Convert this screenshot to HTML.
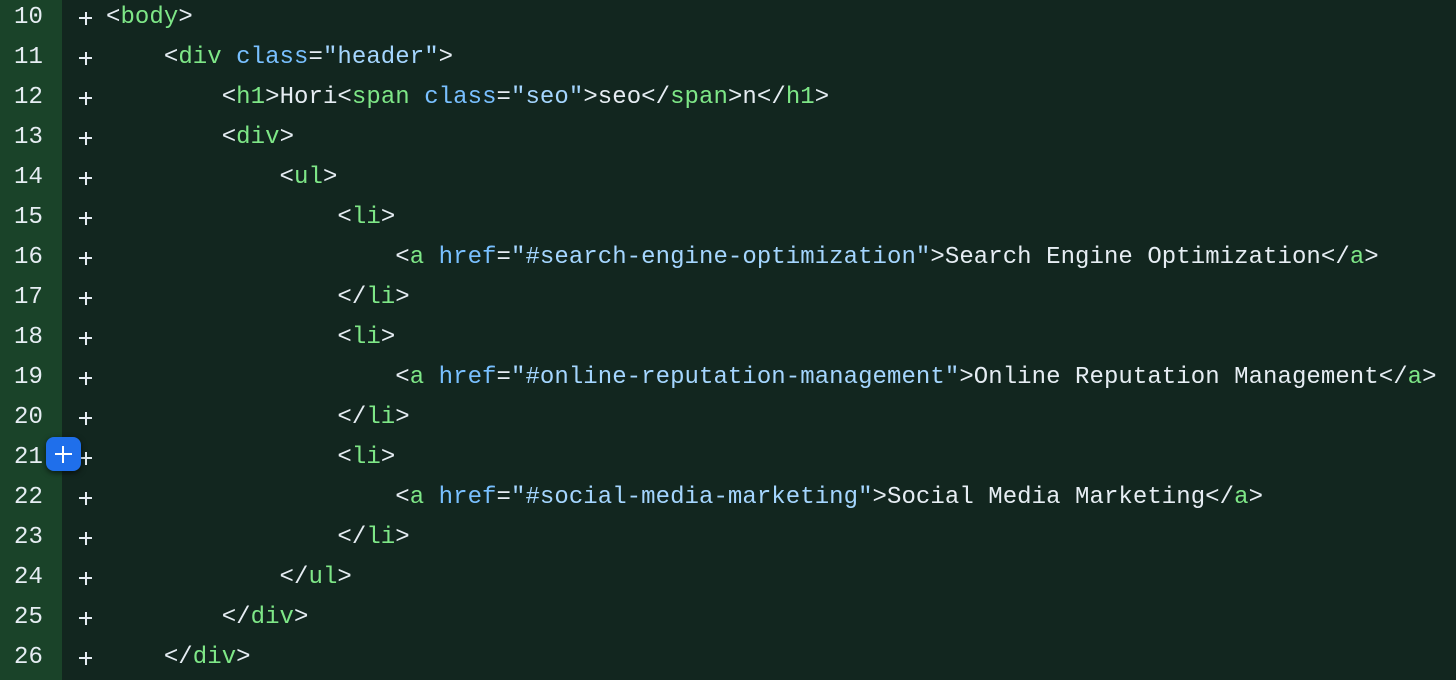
<!DOCTYPE html>
<html><head><style>
html,body{margin:0;padding:0;width:1456px;height:680px;overflow:hidden;background:#12261f;}
.g{position:absolute;left:0;top:0;width:62px;height:680px;background:#1a4329;}
.r{position:absolute;left:0;height:40px;line-height:40px;width:1456px;font-family:"Liberation Mono",monospace;font-size:24px;letter-spacing:0.06px;color:#e6edf3;white-space:pre;}
.n{position:absolute;left:14px;color:#e6edf3;}
.p{position:absolute;left:79px;top:19px;width:13px;height:2px;background:#e6edf3;}
.p:after{content:"";position:absolute;left:5.5px;top:-5.5px;width:2px;height:13px;background:#e6edf3;}
.c{position:absolute;left:106px;}
.t{color:#7ee787}.a{color:#79c0ff}.s{color:#a5d6ff}
.btn{position:absolute;left:46px;top:437px;width:35px;height:34px;background:#1f6feb;border-radius:8px;box-shadow:0 2px 6px rgba(0,0,0,.6);}
.btn:before{content:"";position:absolute;left:9px;top:16px;width:17px;height:2px;background:#fff;}
.btn:after{content:"";position:absolute;left:16px;top:9px;width:2px;height:17px;background:#fff;}
</style></head><body>
<div class="g"></div>
<div class="r" style="top:-2px"><span class="n">10</span><span class="p"></span><span class="c">&lt;<span class="t">body</span>&gt;</span></div>
<div class="r" style="top:38px"><span class="n">11</span><span class="p"></span><span class="c">    &lt;<span class="t">div</span> <span class="a">class</span>=<span class="s">"header"</span>&gt;</span></div>
<div class="r" style="top:78px"><span class="n">12</span><span class="p"></span><span class="c">        &lt;<span class="t">h1</span>&gt;Hori&lt;<span class="t">span</span> <span class="a">class</span>=<span class="s">"seo"</span>&gt;seo&lt;/<span class="t">span</span>&gt;n&lt;/<span class="t">h1</span>&gt;</span></div>
<div class="r" style="top:118px"><span class="n">13</span><span class="p"></span><span class="c">        &lt;<span class="t">div</span>&gt;</span></div>
<div class="r" style="top:158px"><span class="n">14</span><span class="p"></span><span class="c">            &lt;<span class="t">ul</span>&gt;</span></div>
<div class="r" style="top:198px"><span class="n">15</span><span class="p"></span><span class="c">                &lt;<span class="t">li</span>&gt;</span></div>
<div class="r" style="top:238px"><span class="n">16</span><span class="p"></span><span class="c">                    &lt;<span class="t">a</span> <span class="a">href</span>=<span class="s">"#search-engine-optimization"</span>&gt;Search Engine Optimization&lt;/<span class="t">a</span>&gt;</span></div>
<div class="r" style="top:278px"><span class="n">17</span><span class="p"></span><span class="c">                &lt;/<span class="t">li</span>&gt;</span></div>
<div class="r" style="top:318px"><span class="n">18</span><span class="p"></span><span class="c">                &lt;<span class="t">li</span>&gt;</span></div>
<div class="r" style="top:358px"><span class="n">19</span><span class="p"></span><span class="c">                    &lt;<span class="t">a</span> <span class="a">href</span>=<span class="s">"#online-reputation-management"</span>&gt;Online Reputation Management&lt;/<span class="t">a</span>&gt;</span></div>
<div class="r" style="top:398px"><span class="n">20</span><span class="p"></span><span class="c">                &lt;/<span class="t">li</span>&gt;</span></div>
<div class="r" style="top:438px"><span class="n">21</span><span class="p"></span><span class="c">                &lt;<span class="t">li</span>&gt;</span></div>
<div class="r" style="top:478px"><span class="n">22</span><span class="p"></span><span class="c">                    &lt;<span class="t">a</span> <span class="a">href</span>=<span class="s">"#social-media-marketing"</span>&gt;Social Media Marketing&lt;/<span class="t">a</span>&gt;</span></div>
<div class="r" style="top:518px"><span class="n">23</span><span class="p"></span><span class="c">                &lt;/<span class="t">li</span>&gt;</span></div>
<div class="r" style="top:558px"><span class="n">24</span><span class="p"></span><span class="c">            &lt;/<span class="t">ul</span>&gt;</span></div>
<div class="r" style="top:598px"><span class="n">25</span><span class="p"></span><span class="c">        &lt;/<span class="t">div</span>&gt;</span></div>
<div class="r" style="top:638px"><span class="n">26</span><span class="p"></span><span class="c">    &lt;/<span class="t">div</span>&gt;</span></div>
<div class="btn"></div>
</body></html>
